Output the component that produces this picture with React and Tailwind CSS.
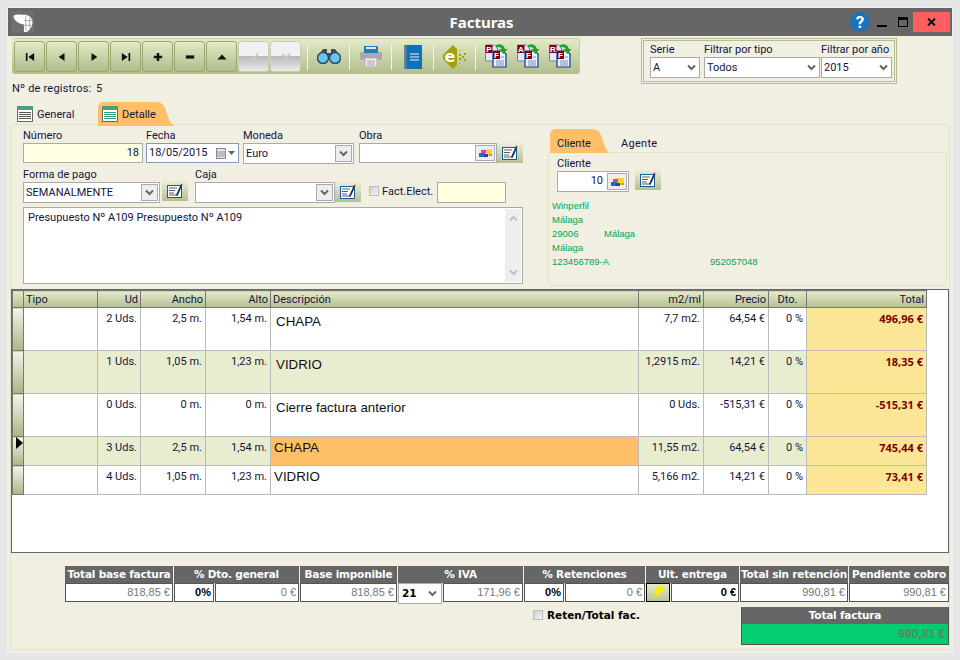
import React from 'react'

const Chevron = ({ className = 'text-[#666]' }) => (
  <svg width="9" height="7" viewBox="0 0 9 7" className={className}>
    <path d="M1 1.5 L4.5 5 L8 1.5" fill="none" stroke="currentColor" strokeWidth="2" />
  </svg>
)

const ChevronBox = () => (
  <div className="w-[17px] h-[17px] flex items-center justify-center bg-[#eeeeee] border border-[#aaaaaa] shrink-0">
    <Chevron />
  </div>
)

const Folder = () => (
  <svg width="13" height="10" viewBox="0 0 13 10">
    <rect x="4" y="1" width="9" height="7" fill="#f5d63d" />
    <rect x="2" y="2" width="5" height="3" fill="#e835c8" />
    <rect x="0" y="5" width="6" height="4" fill="#1f6fa8" />
    <rect x="5" y="6" width="4" height="3" fill="#3a3a9a" />
    <rect x="10" y="6" width="3" height="2" fill="#c8a020" />
  </svg>
)

const EditBtn = () => (
  <button className="w-[26px] h-[21px] shrink-0 flex items-center justify-center bg-gradient-to-b from-[#eef0de] to-[#b4c08f]">
    <svg width="16" height="15" viewBox="0 0 16 15">
      <rect x="0.5" y="2.5" width="14" height="12" fill="#fff" stroke="#0f5f9e" />
      <path d="M2 5h8M2 7.5h6M2 10h5M2 12h8" stroke="#333" strokeWidth="0.8" />
      <path d="M9 12 L13.5 2 L15 3 L10.5 13 Z" fill="#1a2a55" />
      <path d="M13.5 2 L14 0.5 L15.6 1.4 L15 3 Z" fill="#cc2a1a" />
    </svg>
  </button>
)

const Field = ({ label, className, children }) => (
  <div className={className}>
    <div className="h-[15px] leading-[16px] text-[#14143c] whitespace-nowrap">{label}</div>
    {children}
  </div>
)

const Select = ({ value, boxed, className }) => (
  <div className={`h-[21px] bg-white border border-[#aaaaaa] flex items-center justify-between pl-[2px] pr-[1px] ${className}`}>
    <span className="truncate pt-px">{value}</span>
    {boxed ? <ChevronBox /> : <span className="pr-[2px] flex"><Chevron /></span>}
  </div>
)

const Nav = ({ d }) => (
  <button className="w-[31px] h-[31px] mr-px shrink-0 rounded-[3px] border border-[#9bab6d] bg-gradient-to-b from-[#e3eac8] to-[#b1bd8c] flex items-center justify-center">
    <svg width="10" height="8" viewBox="0 0 12 10" preserveAspectRatio="none"><path d={d} fill="#111" /></svg>
  </button>
)

const Disabled = ({ d }) => (
  <button className="relative w-[31px] h-[31px] mr-px shrink-0 rounded-[3px] overflow-hidden border border-[#c9ceb4] bg-gradient-to-b from-[#f1f1f1] from-50% via-[#b9b9b9] via-50% to-[#ececec] flex items-center justify-center">
    <svg width="12" height="10" viewBox="0 0 12 10"><path d={d} fill="none" stroke="#c9c9c9" strokeWidth="2" /></svg>
  </button>
)

const Sep = () => <div className="w-px h-[26px] bg-[#f4f4ea] shrink-0" />

const DocIcon = ({ letter }) => (
  <svg width="23" height="24" viewBox="0 0 23 24">
    <path d="M0.5 1h9l3 3v13H0.500z" fill="#dfe8f5" stroke="#5a6f96" strokeWidth="0.8" />
    <rect x="0.500" y="1" width="7" height="8" fill="#7a0014" />
    <text x="4" y="8" textAnchor="middle" fontSize="8" fontWeight="700" fill="#fff" fontFamily="Liberation Sans, sans-serif">{letter}</text>
    <path d="M8 7h10l3 3v13H8z" fill="#e9f0fb" stroke="#123a86" strokeWidth="1.200" />
    <rect x="8" y="7" width="7" height="8" fill="#7a0014" />
    <text x="11.500" y="14" textAnchor="middle" fontSize="8" fontWeight="700" fill="#fff" fontFamily="Liberation Sans, sans-serif">F</text>
    <path d="M11 17h8M11 19h8M11 21h8M16 13h3" stroke="#5b7fb8" strokeWidth="0.8" />
    <path d="M11 1 C15 -1 19 1 20 5 L22.500 5 L18.500 10 L14.500 5 L17 5 C16 3.500 14 2.500 11 3.500 Z" fill="#1fa32e" />
  </svg>
)

const ListIcon = ({ active }) => (
  <svg width="16" height="16" viewBox="0 0 16 16">
    <rect x="0.5" y="0.5" width="15" height="15" fill="#fff" stroke="#666" />
    <rect x="0" y="0" width="16" height="4" fill="#4f9c7d" />
    <path d="M2 6.5h12M2 8.5h12M2 10.5h12M2 12.5h12" stroke={active ? '#2f9a78' : '#555'} />
  </svg>
)

const rows = [
  { h: 'h-[43px]', ud: '2 Uds.', an: '2,5 m.', al: '1,54 m.', desc: 'CHAPA', m: '7,7 m2.', pr: '64,54 €', to: '496,96 €' },
  { h: 'h-[43px]', alt: true, ud: '1 Uds.', an: '1,05 m.', al: '1,23 m.', desc: 'VIDRIO', m: '1,2915 m2.', pr: '14,21 €', to: '18,35 €' },
  { h: 'h-[43px]', ud: '0 Uds.', an: '0 m.', al: '0 m.', desc: 'Cierre factura anterior', m: '0 Uds.', pr: '-515,31 €', to: '-515,31 €' },
  { h: 'h-[29px]', alt: true, sel: true, short: true, ud: '3 Uds.', an: '2,5 m.', al: '1,54 m.', desc: 'CHAPA', m: '11,55 m2.', pr: '64,54 €', to: '745,44 €' },
  { h: 'h-[29px]', short: true, ud: '4 Uds.', an: '1,05 m.', al: '1,23 m.', desc: 'VIDRIO', m: '5,166 m2.', pr: '14,21 €', to: '73,41 €' },
]

const Th = ({ children, className = '' }) => (
  <th className={`h-[17px] p-0 px-[2px] pt-px font-normal leading-none border border-[#777777] bg-gradient-to-b from-[#e6ebcd] to-[#b3bf90] text-[#14143c] ${className}`}>{children}</th>
)

const Td = ({ children, className = '', pad = 'pt-[4px]' }) => (
  <td className={`p-0 ${pad} pr-[3px] align-top text-right border border-[#bbbbbb] leading-[14px] text-[#14143c] whitespace-nowrap ${className}`}>{children}</td>
)

const Head = ({ children }) => (
  <div className="h-[17px] bg-[#666666] text-white font-bold text-center leading-[17px] whitespace-nowrap tracking-[-0.2px]">{children}</div>
)

const Val = ({ children, className = '' }) => (
  <div className={`h-[19px] bg-white border border-[#555555] text-right pr-[2px] leading-[17px] whitespace-nowrap font-['Liberation_Sans',sans-serif] text-[11px] ${className}`}>{children}</div>
)

export default function App() {
  return (
    <div className="w-[960px] h-[660px] bg-[#e6e6e6] p-[7px] text-[11px] text-[#14143c] font-['Roboto',sans-serif] overflow-hidden">
      <div className="w-[946px] h-[646px] border border-[#f2f2f2] bg-[#f1efe2] flex flex-col">
        {/* barra de titulo */}
        <div className="relative h-[28px] shrink-0 bg-[#666666] flex items-center justify-center pl-[3px]">
          <div className="absolute left-[3px] top-[3px] w-[23px] h-[22px] bg-[#6f6f6f] flex items-center justify-center">
            <svg width="21" height="20" viewBox="0 0 21 21">
              <path d="M1 5 C1 3 5 2 9 3 L14 3 C18 4 21 7 21 11 C21 15 18 19 15 21 L12 21 L12 13 C8 13 2 10 1 5 Z" fill="#fff" />
              <path d="M14 4v16M18 6v11M12 9h9M12 14h8" stroke="#999" strokeWidth="0.8" />
            </svg>
          </div>
          <span className="text-white font-bold text-[15px] font-['Noto_Sans',sans-serif]">Facturas</span>
          <div className="absolute left-[842px] top-[4px] w-[20px] h-[20px] rounded-full bg-[#1d71b8] text-white font-bold text-[17px] leading-[20px] text-center">?</div>
          <div className="absolute left-[869px] top-[17px] w-[10px] h-[2px] bg-black" />
          <div className="absolute left-[890px] top-[9px] w-[10px] h-[10px] border border-black border-t-[3px]" />
          <div className="absolute left-[905px] top-[4px] w-[37px] h-[20px] bg-[#ff5f5f] flex items-center justify-center">
            <svg width="9" height="8" viewBox="0 0 9 8"><path d="M1 0.5 L8 7.5 M8 0.5 L1 7.5" stroke="#111" strokeWidth="2" /></svg>
          </div>
        </div>

        {/* barra de herramientas */}
        <div className="h-[88px] shrink-0 flex pl-[4px] pt-[2px]">
          <div className="w-[568px]">
            <div className="h-[36px] rounded-[3px] bg-gradient-to-b from-[#e4eaca] to-[#b1bd8c] border-t border-r border-[#c5cfa6] flex items-center pl-[2px]">
              <Nav d="M1 0h2v10H1zM11 0v10L4 5z" />
              <Nav d="M9 0v10L2 5z" />
              <Nav d="M3 0v10l7-5z" />
              <Nav d="M1 0v10l7-5zM9 0h2v10H9z" />
              <Nav d="M4.500 0h3v3.500H11v3H7.500V10h-3V6.500H1v-3h3.500z" />
              <Nav d="M1 3h10v4H1z" />
              <Nav d="M6 2l5.500 6H.5z" />
              <Disabled d="M2 6l3 3 5-8" />
              <Disabled d="M2 2l8 7M10 2L2 9" />
              <div className="ml-[5px]"><Sep /></div>
              <div className="w-[41px] flex justify-center">
                <svg width="24" height="15" viewBox="0 0 24 15">
                  <path d="M3 4 L6 0 H10 V4 H14 V0 H18 L21 4 L12 7 Z" fill="#3d4a60" />
                  <circle cx="6" cy="9" r="5.500" fill="#62c8ee" stroke="#3d4a60" strokeWidth="1.500" />
                  <circle cx="18" cy="9" r="5.500" fill="#62c8ee" stroke="#3d4a60" strokeWidth="1.500" />
                </svg>
              </div>
              <Sep />
              <div className="w-[41px] flex justify-center">
                <svg width="22" height="21" viewBox="0 0 22 21">
                  <rect x="0" y="6" width="22" height="8" rx="1" fill="#a9a9ad" />
                  <rect x="4" y="0" width="14" height="7" fill="#1f7ec2" />
                  <rect x="6" y="1" width="10" height="2" fill="#dfeaf5" />
                  <rect x="5" y="12" width="12" height="9" fill="#f4f0f2" stroke="#b9a3b5" />
                  <path d="M7 15h8M7 17h8M7 19h8" stroke="#a0a0a0" />
                </svg>
              </div>
              <Sep />
              <div className="w-[41px] flex justify-center">
                <svg width="18" height="24" viewBox="0 0 18 24">
                  <rect x="0" y="0" width="18" height="24" fill="#0f72b8" />
                  <rect x="0" y="0" width="2.500" height="24" fill="#6d7f90" />
                  <path d="M6 9h9M6 12h9M6 15h9" stroke="#e8f4fb" />
                </svg>
              </div>
              <Sep />
              <div className="w-[41px] flex justify-center">
                <svg width="24" height="24" viewBox="0 0 24 24">
                  <path d="M10 0 L14 4 V20 L10 24 L0 14 V10 Z" fill="#a4a000" />
                  <text x="7" y="17" textAnchor="middle" fontSize="16" fontWeight="700" fill="#fff" fontFamily="DejaVu Sans, sans-serif">e</text>
                  <path d="M16 9h2v2h-2zM16 13h2v2h-2zM19 11h2v2h-2zM21 8h2v2h-2zM21 14h2v2h-2zM16 5h1v1h-1zM16 18h1v1h-1z" fill="#a4a000" />
                </svg>
              </div>
              <Sep />
              <div className="w-[32px] ml-[9px] flex -translate-y-px"><DocIcon letter="P" /></div>
              <div className="w-[32px] flex -translate-y-px"><DocIcon letter="A" /></div>
              <div className="w-[23px] flex -translate-y-px"><DocIcon letter="R" /></div>
            </div>
            <div className="h-[27px] flex items-center pt-[3px]">
              <span className="w-[84px] tracking-[0.2px]">Nº de registros:</span>
              <span>5</span>
            </div>
          </div>
          <div className="ml-[61px] w-[256px] h-[46px] border-[3px] border-double border-[#b3bf8c] pl-[6px] pr-[2px] pt-[1px] flex">
            <Field label="Serie" className="w-[54px]"><Select value="A" className="w-[50px]" /></Field>
            <Field label="Filtrar por tipo" className="w-[117px]"><Select value="Todos" className="w-[116px]" /></Field>
            <Field label="Filtrar por año" className="w-[71px]"><Select value="2015" className="w-[71px]" /></Field>
          </div>
        </div>

        {/* panel principal */}
        <div className="relative flex-1 mx-[2px] mb-[2px] border border-[#e2e3c3] rounded-[4px] flex flex-col">
          {/* pestañas */}
          <div className="absolute left-[6px] -top-[23px] h-[23px] flex items-center gap-[4px]">
            <ListIcon />
            <span className="pt-[3px]">General</span>
          </div>
          <div className="absolute left-[87px] -top-[23px] w-[76px] h-[24px] bg-[#ffbf66] [clip-path:path('M0_24L0_6Q0_0_6_0L58_0Q65_0_67_6L72_20L76_24Z')] flex items-center pl-[4px] gap-[4px]">
            <ListIcon active />
            <span className="pt-[3px]">Detalle</span>
          </div>

          <div className="h-[164px] shrink-0 flex">
            {/* datos de la factura */}
            <div className="w-[537px] pl-[12px] pt-[3px]">
              <div className="flex h-[39px]">
                <Field label="Número" className="w-[123px]">
                  <div className="w-[120px] h-[20px] bg-[#ffffe1] border border-[#aaaaaa] text-right pr-[3px] leading-[18px]">18</div>
                </Field>
                <Field label="Fecha" className="w-[97px]">
                  <div className="w-[93px] h-[20px] bg-white border border-[#7f9db9] flex items-center pl-[2px] justify-between pr-[3px]">
                    <span>18/05/2015</span>
                    <span className="flex items-center gap-[2px]">
                      <svg width="10" height="11" viewBox="0 0 10 11"><rect x="0.5" y="0.5" width="9" height="10" fill="#e4e4ea" stroke="#8a8a92" /><path d="M2 3v6M4 3v6M6 3v6M8 3v6M1 4h8M1 6h8M1 8h8" stroke="#9a9aa6" strokeWidth="0.6" /></svg>
                      <svg width="7" height="4" viewBox="0 0 7 4"><path d="M0 0h7L3.500 4z" fill="#4a6a8a" /></svg>
                    </span>
                  </div>
                </Field>
                <Field label="Moneda" className="w-[116px]"><Select value="Euro" boxed className="w-[111px]" /></Field>
                <Field label="Obra" className="w-[165px]">
                  <div className="flex">
                    <div className="w-[138px] h-[20px] bg-white border border-[#aaaaaa] flex justify-end items-center pr-px">
                      <div className="w-[20px] h-[16px] bg-[#eeeeee] border border-[#aaaaaa] flex items-center justify-center"><Folder /></div>
                    </div>
                    <div className="-mt-px"><EditBtn /></div>
                  </div>
                </Field>
              </div>
              <div className="flex h-[25px]">
                <Field label="Forma de pago" className="w-[172px]">
                  <div className="flex">
                    <Select value="SEMANALMENTE" boxed className="w-[137px]" />
                    <div className="ml-[2px] -mt-[2px]"><EditBtn /></div>
                  </div>
                </Field>
                <Field label="Caja" className="w-[174px]">
                  <div className="flex">
                    <Select value="" boxed className="w-[140px]" />
                    <div className="-mt-px"><EditBtn /></div>
                  </div>
                </Field>
                <div className="pt-[15px] flex items-start">
                  <div className="mt-[4px] w-[10px] h-[10px] bg-gradient-to-br from-[#cfcfcf] to-[#f4f4f4] border border-[#bdbdbd]" />
                  <span className="ml-[3px] mt-[3px] leading-[14px] w-[55px] whitespace-nowrap">Fact.Elect.</span>
                  <div className="w-[69px] h-[21px] bg-[#ffffe1] border border-[#aaaaaa]" />
                </div>
              </div>
              <div className="mt-[15px] w-[500px] h-[77px] bg-white border border-[#aaaaaa] flex justify-between p-px">
                <span className="pl-[3px] pt-[1px] leading-[16px]">Presupuesto Nº A109 Presupuesto Nº A109</span>
                <div className="w-[16px] bg-[#eeeeee] flex flex-col items-center justify-between py-[6px]">
                  <Chevron className="text-[#c0c0c0] rotate-180" />
                  <Chevron className="text-[#c0c0c0]" />
                </div>
              </div>
            </div>

            {/* cliente */}
            <div className="relative w-[399px] pt-[27px]">
              <div className="absolute left-[2px] top-[4px] w-[59px] h-[24px] bg-[#ffbf66] [clip-path:path('M0_24L0_6Q0_0_6_0L42_0Q49_0_51_6L56_20L59_24Z')] pl-[7px] leading-[29px] text-[#14143c]">Cliente</div>
              <div className="absolute left-[73px] top-[4px] h-[24px] leading-[29px] tracking-[0.3px]">Agente</div>
              <div className="w-[399px] h-[134px] border border-[#e2e3c3] rounded-[4px] pt-[3px]">
                <div className="pl-[8px] flex">
                  <Field label="Cliente" className="w-[78px]">
                    <div className="w-[72px] h-[21px] bg-white border border-[#aaaaaa] flex items-center justify-end pr-px">
                      <span className="pr-[4px]">10</span>
                      <div className="w-[20px] h-[17px] bg-[#eeeeee] border border-[#aaaaaa] flex items-center justify-center"><Folder /></div>
                    </div>
                  </Field>
                  <div className="mt-[13px]"><EditBtn /></div>
                </div>
                <div className="mt-[7px] pl-[3px] text-[#00a651] font-['Liberation_Sans',sans-serif] text-[9.5px] leading-[14px]">
                  <div>Winperfil</div>
                  <div>Málaga</div>
                  <div className="flex"><span className="w-[52px]">29006</span><span>Málaga</span></div>
                  <div>Málaga</div>
                  <div className="flex"><span className="w-[158px]">123456789-A</span><span>952057048</span></div>
                </div>
              </div>
            </div>
          </div>

          {/* lineas */}
          <div className="w-[938px] h-[264px] shrink-0 bg-white border border-[#666666]">
            <table className="w-[914px] table-fixed border-collapse">
              <colgroup>
                <col className="w-[11px]" />
                <col className="w-[74px]" />
                <col className="w-[43px]" />
                <col className="w-[65px]" />
                <col className="w-[65px]" />
                <col className="w-[368px]" />
                <col className="w-[65px]" />
                <col className="w-[65px]" />
                <col className="w-[38px]" />
                <col className="w-[120px]" />
              </colgroup>
              <thead>
                <tr>
                  <Th />
                  <Th className="text-left">Tipo</Th>
                  <Th className="text-right">Ud</Th>
                  <Th className="text-right">Ancho</Th>
                  <Th className="text-right">Alto</Th>
                  <Th className="text-left">Descripción</Th>
                  <Th className="text-right">m2/ml</Th>
                  <Th className="text-right">Precio</Th>
                  <Th className="text-center">Dto.</Th>
                  <Th className="text-right">Total</Th>
                </tr>
              </thead>
              <tbody>
                {rows.map((r, i) => (
                  <tr key={i} className={`${r.h} ${r.alt ? 'bg-[#e9edd0]' : 'bg-white'}`}>
                    <td className="relative p-0 border border-[#777777] bg-gradient-to-b from-[#f3f4ec] to-[#a9b687]">
                      {r.sel && (
                        <svg width="7" height="12" viewBox="0 0 7 12" className="absolute left-[3px] top-0"><path d="M0 0l7 6-7 6z" fill="#000" /></svg>
                      )}
                    </td>
                    <Td />
                    <Td>{r.ud}</Td>
                    <Td>{r.an}</Td>
                    <Td>{r.al}</Td>
                    <Td pad={r.short ? 'pt-[4px]' : 'pt-[7px]'} className={`text-left! font-['Liberation_Sans',sans-serif] text-[13.33px] text-[#111]! ${r.short ? 'pl-[3px]' : 'pl-[5px]'} ${r.sel ? 'bg-[#ffbf66]' : ''}`}>{r.desc}</Td>
                    <Td>{r.m}</Td>
                    <Td>{r.pr}</Td>
                    <Td>0 %</Td>
                    <Td className="bg-[#fbe596] font-['Noto_Sans',sans-serif] font-bold text-[#800000]!">{r.to}</Td>
                  </tr>
                ))}
              </tbody>
            </table>
          </div>

          {/* totales */}
          <div className="mt-[13px] pl-[54px] flex gap-px font-['DejaVu_Sans',sans-serif] text-[10.5px]">
            <div className="w-[108px]"><Head>Total base factura</Head><Val className="text-[#777777]">818,85 €</Val></div>
            <div className="w-[125px]"><Head>% Dto. general</Head>
              <div className="flex gap-px">
                <Val className="w-[40px] font-bold text-black">0%</Val>
                <Val className="flex-1 text-[#777777]">0 €</Val>
              </div>
            </div>
            <div className="w-[97px]"><Head>Base imponible</Head><Val className="text-[#777777]">818,85 €</Val></div>
            <div className="w-[125px]"><Head>% IVA</Head>
              <div className="flex gap-px h-[19px]">
                <div className="w-[44px] h-[21px] shrink-0 bg-white border border-[#aaaaaa] flex items-center justify-between pl-[3px] pr-[4px] font-bold text-black">21 <Chevron /></div>
                <Val className="flex-1 text-[#777777]">171,96 €</Val>
              </div>
            </div>
            <div className="w-[121px]"><Head>% Retenciones</Head>
              <div className="flex gap-px">
                <Val className="w-[40px] font-bold text-black">0%</Val>
                <Val className="flex-1 text-[#777777]">0 €</Val>
              </div>
            </div>
            <div className="w-[93px]"><Head>Ult. entrega</Head>
              <div className="flex gap-px">
                <button className="w-[24px] h-[19px] shrink-0 border border-black bg-gradient-to-b from-[#e4e8cf] to-[#b9c398] flex items-center justify-center">
                  <svg width="14" height="13" viewBox="0 0 14 13"><path d="M8 0h6L9 4h4L2 13l4-6H1z" fill="#ffee00" /></svg>
                </button>
                <Val className="flex-1 font-bold text-black">0 €</Val>
              </div>
            </div>
            <div className="w-[108px]"><Head>Total sin retención</Head><Val className="text-[#777777]">990,81 €</Val></div>
            <div className="w-[100px]"><Head>Pendiente cobro</Head><Val className="text-[#777777]">990,81 €</Val></div>
          </div>
          <div className="mt-[5px] pl-[522px] flex font-['DejaVu_Sans',sans-serif] text-[10.5px]">
            <div className="mt-[3px] w-[10px] h-[10px] bg-gradient-to-br from-[#cfcfcf] to-[#f4f4f4] border border-[#bdbdbd]" />
            <span className="ml-[4px] font-bold text-black leading-[16px]">Reten/Total fac.</span>
            <div className="ml-auto w-[208px] border border-[#555555] border-t-0">
              <Head>Total factura</Head>
              <div className="h-[20px] bg-[#05cc6e] text-right pr-[3px] text-[#4d8c68] font-bold leading-[20px] font-['Liberation_Sans',sans-serif] text-[12px]">990,81 €</div>
            </div>
          </div>
        </div>
      </div>
    </div>
  )
}
